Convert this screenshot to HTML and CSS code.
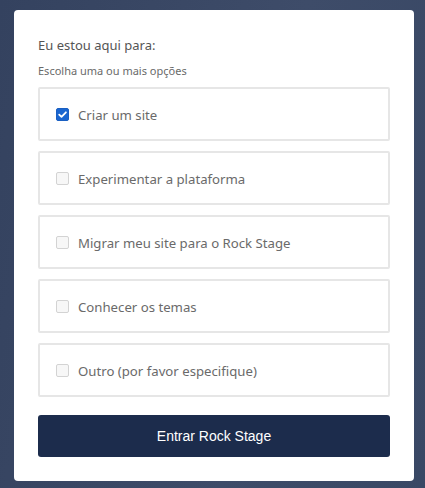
FILE: index.html
```html
<!DOCTYPE html>
<html lang="pt">
<head>
<meta charset="utf-8">
<link rel="stylesheet" href="styles.css">
</head>
<body>
<div class="card">
  <div class="title">Eu estou aqui para:</div>
  <div class="subtitle">Escolha uma ou mais opções</div>
  <div class="options">
    <label class="option"><span class="box checked"><svg viewBox="0 0 13 13" width="13" height="13"><path d="M3.2 6.6 L5.5 8.8 L9.9 4.3" fill="none" stroke="#fff" stroke-width="1.8" stroke-linecap="round" stroke-linejoin="round"/></svg></span><span class="text">Criar um site</span></label>
    <label class="option"><span class="box"></span><span class="text">Experimentar a plataforma</span></label>
    <label class="option"><span class="box"></span><span class="text">Migrar meu site para o Rock Stage</span></label>
    <label class="option"><span class="box"></span><span class="text">Conhecer os temas</span></label>
    <label class="option"><span class="box"></span><span class="text">Outro (por favor especifique)</span></label>
  </div>
  <button class="submit">Entrar Rock Stage</button>
</div>
</body>
</html>
```
FILE: styles.css
```css
html, body { margin: 0; height: 100%; }
body {
  background: linear-gradient(100deg, #34425f 0%, #3e4c69 60%, #394865 100%);
  padding: 10px 11px 7px 14px;
  box-sizing: border-box;
  font-family: "Noto Sans", "Open Sans", sans-serif;
}
.card {
  width: 400px;
  height: 471px;
  box-sizing: border-box;
  background: #fff;
  border-radius: 4px;
  padding: 25px 24px 24px 24px;
}
.title {
  font-size: 13px;
  line-height: 20px;
  color: #555;
}
.subtitle {
  font-size: 11px;
  line-height: 14px;
  color: #6a6a6a;
  margin-top: 9px;
}
.options {
  display: flex;
  flex-direction: column;
  gap: 10px;
  margin-top: 9px;
}
.option {
  height: 54px;
  box-sizing: border-box;
  border: 2px solid #e6e6e6;
  border-radius: 2px;
  display: flex;
  align-items: center;
  padding-left: 16px;
  gap: 9px;
}
.box {
  width: 13px;
  height: 13px;
  box-sizing: border-box;
  border: 1px solid #d3d3d3;
  border-radius: 2px;
  background: #f7f7f7;
  display: flex;
  margin-top: 1px;
}
.box.checked {
  background: #1a66d0;
  border-color: #1a5fc2;
}
.box svg { margin: -1px; }
.text {
  font-size: 13.2px;
  line-height: 18px;
  padding-top: 2px;
  color: #6a6a6a;
}
.submit {
  display: block;
  width: 352px;
  height: 42px;
  margin-top: 18px;
  border: none;
  border-radius: 3px;
  background: #1c2c4c;
  color: #fff;
  font-family: "Liberation Sans", Arial, sans-serif;
  font-size: 14px;
}
```
